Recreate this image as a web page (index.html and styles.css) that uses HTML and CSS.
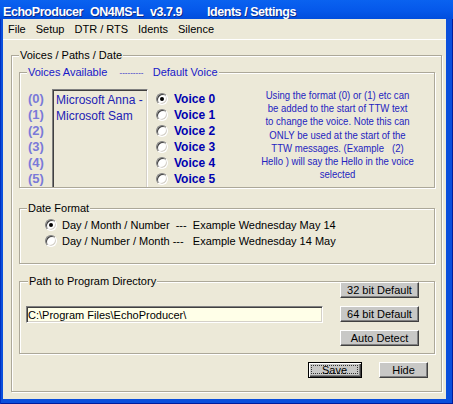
FILE: index.html
```html
<!DOCTYPE html>
<html lang="en">
<head>
<meta charset="utf-8">
<title>EchoProducer - Idents / Settings</title>
<link rel="stylesheet" href="styles.css">
</head>
<body>
<div class="window">
  <div class="titlebar">
    <span class="tt t1">EchoProducer</span><span class="tt t2">ON4MS-L</span><span class="tt t3">v3.7.9</span><span class="tt">Idents / Settings</span>
  </div>
  <div class="client">
    <div class="menubar">
      <span class="menu-item">File</span><span class="menu-item">Setup</span><span class="menu-item">DTR / RTS</span><span class="menu-item">Idents</span><span class="menu-item">Silence</span>
    </div>
    <fieldset class="group outer">
      <legend>Voices / Paths / Date</legend>

      <fieldset class="group voices">
        <legend class="blue-legend">Voices Available    <span class="dashes">---------</span>   Default Voice</legend>
        <div class="voices-row">
          <div class="nums">
            <div>(0)</div><div>(1)</div><div>(2)</div><div>(3)</div><div>(4)</div><div>(5)</div>
          </div>
          <div class="listbox">
            <div>Microsoft Anna -</div>
            <div>Microsoft Sam</div>
          </div>
          <div class="voice-radios">
            <div class="vr"><span class="radio on"></span><span>Voice 0</span></div>
            <div class="vr"><span class="radio"></span><span>Voice 1</span></div>
            <div class="vr"><span class="radio"></span><span>Voice 2</span></div>
            <div class="vr"><span class="radio"></span><span>Voice 3</span></div>
            <div class="vr"><span class="radio"></span><span>Voice 4</span></div>
            <div class="vr"><span class="radio"></span><span>Voice 5</span></div>
          </div>
          <div class="note"><span class="ln">Using the format (0) or (1) etc can</span><span class="ln">be added to the start of TTW text</span><span class="ln">to change the voice. Note this can</span><span class="ln">ONLY be used at the start of the</span><span class="ln">TTW messages. (Example   (2)</span><span class="ln">Hello ) will say the Hello in the voice</span><span class="ln">selected</span></div>
        </div>
      </fieldset>

      <fieldset class="group date">
        <legend>Date Format</legend>
        <div class="date-row"><span class="radio on"></span><span class="dtext">Day / Month / Number  ---  Example Wednesday May 14</span></div>
        <div class="date-row"><span class="radio"></span><span class="dtext">Day / Number / Month ---   Example Wednesday 14 May</span></div>
      </fieldset>

      <fieldset class="group path">
        <legend>Path to Program Directory</legend>
        <div class="path-row">
          <div class="textfield">C:\Program Files\EchoProducer\</div>
          <div class="path-buttons">
            <button class="btn wide">32 bit Default</button>
            <button class="btn wide">64 bit Default</button>
            <button class="btn wide">Auto Detect</button>
          </div>
        </div>
      </fieldset>

      <div class="actions">
        <button class="btn default save"><span class="focus">Save</span></button>
        <button class="btn hide">Hide</button>
      </div>
    </fieldset>
  </div>
</div>
</body>
</html>
```

FILE: styles.css
```css
* { box-sizing: border-box; }
html, body { margin: 0; padding: 0; }
body {
  width: 453px;
  height: 404px;
  overflow: hidden;
  font-family: "Liberation Sans", Arial, sans-serif;
  font-size: 11px;
  color: #000;
}

.window {
  width: 453px;
  height: 404px;
  display: flex;
  flex-direction: column;
  background: #0a4fdc;
  box-shadow: inset 1px 0 0 #0030c0, inset -1px -1px 0 #001c9c;
}

.titlebar {
  flex: none;
  height: 19px;
  padding: 5px 0 0 3px;
  line-height: 14px;
  color: #fff;
  font-weight: bold;
  font-size: 12.5px;
  letter-spacing: -0.45px;
  white-space: nowrap;
  background: linear-gradient(#0a62f0, #0558ea 55%, #004ddd);
  text-shadow: 1px 1px 0 #0a2a8a;
}
.tt { display: inline-block; }
.t1 { width: 87px; }
.t2 { width: 60px; }
.t3 { width: 57px; }

.client {
  flex: 1;
  margin: 0 7px 5px 3px;
  background: #ece9d8;
  display: flex;
  flex-direction: column;
  align-items: flex-start;
}

.menubar {
  align-self: stretch;
  height: 21px;
  padding-top: 1px;
  line-height: 19px;
  border-bottom: 1px solid #fff;
  white-space: nowrap;
}
.menu-item { display: inline-block; padding: 0 5px; }

.group {
  margin: 0;
  min-width: 0;
  border: 1px solid #aca899;
  box-shadow: 1px 1px 0 #fff, inset 1px 1px 0 #fff;
}
.group legend {
  padding: 0 1px;
  line-height: 13px;
  background: #ece9d8;
}

.outer {
  margin: 9px 0 0 8px;
  width: 431px;
  padding: 4px 6px 13px 7px;
}

.voices {
  width: 416px;
  padding: 10px 0 0 7px;
  margin-bottom: 14px;
}
.blue-legend { color: #1818c8; white-space: pre; }
.dashes { font-size: 8px; letter-spacing: 0; vertical-align: 1px; }

.voices-row { display: flex; align-items: flex-start; }

.nums {
  width: 25px;
  padding: 2px 0 0 1px;
  line-height: 16px;
  font-size: 13px;
  font-weight: bold;
  color: #7a7ad8;
}

.listbox {
  width: 96px;
  height: 98px;
  border-style: solid;
  border-width: 1px 1px 0 1px;
  border-color: #808080 #fff #fff #808080;
  box-shadow: inset 1px 1px 0 #404040, inset -1px 0 0 #d4d0c8;
  padding: 2px 0 0 3px;
  font-size: 12px;
  line-height: 16px;
  color: #2222b4;
  white-space: nowrap;
  overflow: hidden;
}

.voice-radios { margin-left: 8px; padding-top: 2px; }
.vr {
  display: flex;
  align-items: center;
  gap: 6px;
  height: 16px;
  font-size: 12px;
  font-weight: bold;
  color: #0000b0;
}

.radio {
  flex: none;
  position: relative;
  width: 12px;
  height: 12px;
  border-radius: 50%;
  background: #fff;
  border: 1px solid;
  border-color: #808080 #fff #fff #808080;
  box-shadow: inset 1px 1px 0 #404040, inset -1px -1px 0 #d4d0c8;
}
.radio.on::after {
  content: "";
  position: absolute;
  left: 3px;
  top: 3px;
  width: 4px;
  height: 4px;
  border-radius: 50%;
  background: #000;
}

.note {
  margin-left: auto;
  width: 193px;
  text-align: center;
  font-size: 11px;
  line-height: 13.2px;
  color: #2424c0;
  white-space: pre;
  transform: scaleX(0.87);
  transform-origin: 50% 0;
}
.ln { display: block; }

.date {
  width: 416px;
  padding: 2px 0 14px 7px;
  margin-bottom: 11px;
}
.date-row {
  display: flex;
  align-items: center;
  gap: 5px;
  height: 16px;
  padding-left: 18px;
  white-space: pre;
}

.path {
  width: 416px;
  padding: 0 15px 7px 6px;
}
.path legend { margin-left: 2px; }
.path-row { display: flex; justify-content: space-between; align-items: flex-start; }

.textfield {
  margin-top: 18px;
  width: 297px;
  height: 17px;
  border: 1px solid;
  border-color: #808080 #fff #fff #808080;
  box-shadow: inset 1px 1px 0 #404040, inset -1px -1px 0 #d4d0c8;
  background: #ffffe8;
  padding: 1px 0 0 1px;
  line-height: 14px;
  white-space: nowrap;
}

.path-buttons {
  margin-top: -6px;
  display: flex;
  flex-direction: column;
  gap: 8px;
}

.btn {
  font: inherit;
  font-size: 11px;
  color: #000;
  padding: 0;
  height: 16px;
  line-height: 13px;
  background: #c8c8c6;
  border: 1px solid;
  border-color: #fff #404040 #404040 #fff;
  box-shadow: inset -1px -1px 0 #808080;
}
.btn.wide { width: 79px; }

.actions {
  align-self: stretch;
  display: flex;
  justify-content: flex-end;
  gap: 17px;
  margin-top: 8px;
  padding-right: 7px;
}
.save { width: 54px; }
.hide { width: 49px; }
.btn.default {
  border: 1px solid #000;
  box-shadow: inset 1px 1px 0 #fff, inset -1px -1px 0 #404040, inset -2px -2px 0 #808080;
  padding: 2px 3px 3px 2px;
  display: flex;
}
.focus {
  flex: 1;
  display: block;
  border: 1px dotted #333;
  line-height: 8px;
}
```
